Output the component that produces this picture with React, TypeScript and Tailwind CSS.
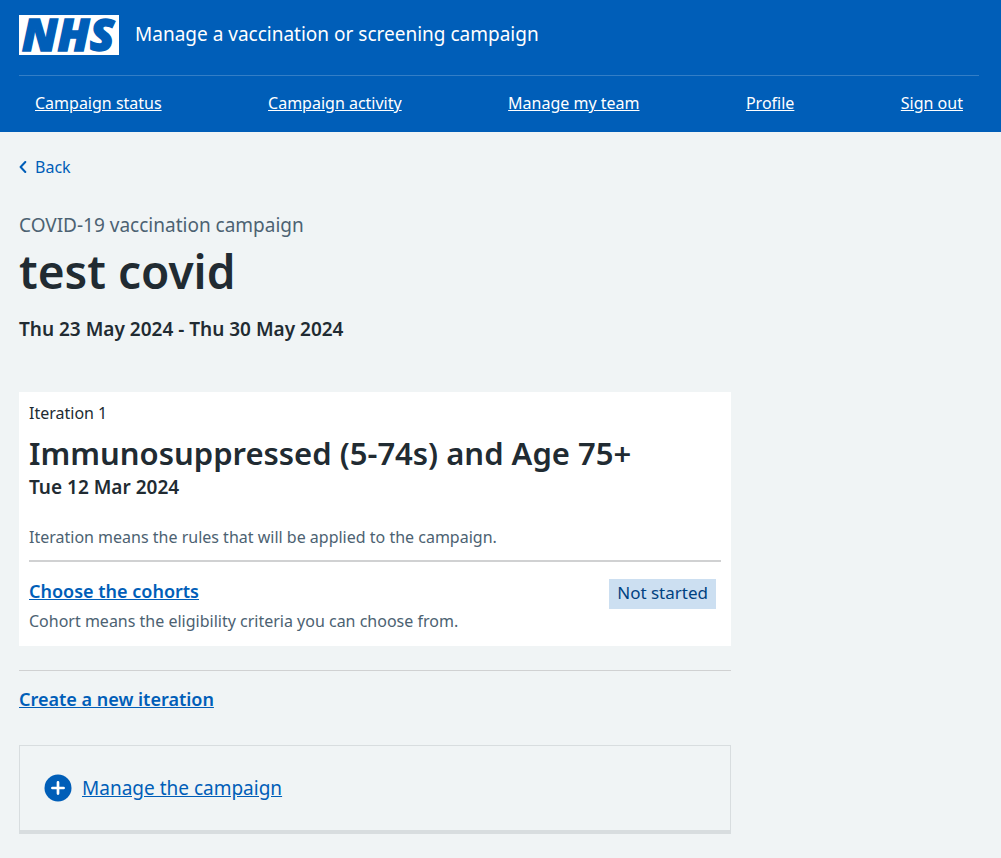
import React from "react";

const navItems = [
  "Campaign status",
  "Campaign activity",
  "Manage my team",
  "Profile",
  "Sign out",
];

function Logo() {
  return (
    <svg
      className="h-10 w-[100px] shrink-0 overflow-visible"
      viewBox="0 0 100 40"
      role="img"
      aria-label="NHS"
    >
      <rect width="100" height="40" fill="#fff" />
      <text
        x="3"
        y="36"
        fontSize="45"
        fontWeight="900"
        fontStyle="italic"
        fill="#005eb8"
        stroke="#005eb8"
        strokeWidth="1.4"
        className="font-['Noto_Sans','Open_Sans',sans-serif]"
      >
        NHS
      </text>
    </svg>
  );
}

function Header() {
  return (
    <header className="bg-[#005eb8] text-white">
      <div className="ml-[19px] mr-[22px] max-w-[960px]">
        <div className="flex items-center gap-4 pt-[15px] pb-5">
          <a href="#" className="shrink-0">
            <Logo />
          </a>
          <a href="#" className="pb-0.5 text-[19px] leading-7">
            Manage a vaccination or screening campaign
          </a>
        </div>
        <nav aria-label="Primary" className="border-t border-[#337ec6]">
          <ul className="flex justify-between px-4 pt-[15px] pb-[17px]">
            {navItems.map((item) => (
              <li key={item}>
                <a href="#" className="text-base leading-6 underline">
                  {item}
                </a>
              </li>
            ))}
          </ul>
        </nav>
      </div>
    </header>
  );
}

function BackLink() {
  return (
    <a href="#" className="flex w-fit items-center gap-2 text-base leading-6 text-[#005eb8]">
      <svg
        className="h-3 w-2"
        viewBox="0 0 8 12"
        fill="none"
        stroke="currentColor"
        strokeWidth="2"
        strokeLinecap="round"
        strokeLinejoin="round"
        aria-hidden="true"
      >
        <path d="M6.3 1 1.6 6l4.7 5" />
      </svg>
      Back
    </a>
  );
}

function IterationCard() {
  return (
    <section className="mt-[49px] bg-white px-2.5 pt-[9px] pb-[13px]">
      <p className="text-base leading-6">Iteration 1</p>
      <h2 className="mt-2 text-[31px] leading-10 font-semibold">
        Immunosuppressed (5-74s) and Age 75+
      </h2>
      <p className="text-[19px] leading-7 font-semibold">Tue 12 Mar 2024</p>
      <p className="mt-6 text-base leading-6 text-[#4c6272]">
        Iteration means the rules that will be applied to the campaign.
      </p>
      <div className="mt-[11px] flex items-start justify-between border-t-2 border-[#d0d1d2] pt-[17px] pr-[5px]">
        <div>
          <a
            href="#"
            className="block w-fit text-lg leading-6 font-semibold text-[#005eb8] underline"
          >
            Choose the cohorts
          </a>
          <p className="mt-1.5 text-base leading-6 text-[#4c6272]">
            Cohort means the eligibility criteria you can choose from.
          </p>
        </div>
        <strong className="bg-[#ccdff1] px-2 pt-[3px] pb-[5px] text-[17px] leading-[22px] font-normal text-[#004281]">
          Not started
        </strong>
      </div>
    </section>
  );
}

function ManagePanel() {
  return (
    <section className="mt-8 border border-b-4 border-[#d8dddf] px-6 py-7">
      <button
        type="button"
        className="flex cursor-pointer items-center gap-2.5 text-[19px] leading-7 text-[#005eb8]"
      >
        <svg className="h-7 w-7" viewBox="0 0 28 28" aria-hidden="true">
          <circle cx="14" cy="14" r="13.5" fill="#005eb8" />
          <path
            d="M14 8.4v11.2M8.4 14h11.2"
            stroke="#fff"
            strokeWidth="2.7"
            strokeLinecap="round"
          />
        </svg>
        <span className="underline">Manage the campaign</span>
      </button>
    </section>
  );
}

export default function App() {
  return (
    <div className="min-h-screen bg-[#f0f4f5] font-['Noto_Sans','Open_Sans',sans-serif] text-[#212b32]">
      <Header />
      <div className="ml-[19px] mr-[22px] max-w-[960px] pt-[23px] pb-6">
        <BackLink />
        <main className="mt-8 grid grid-cols-4 gap-8">
          <div className="col-span-3">
            <h1>
              <span className="block text-[19px] leading-7 text-[#4c6272]">
                COVID-19 vaccination campaign
              </span>
              <span className="block text-[46px] leading-[64px] font-semibold">test covid</span>
            </h1>
            <p className="mt-3 text-[19px] leading-7 font-semibold">
              Thu 23 May 2024 - Thu 30 May 2024
            </p>
            <IterationCard />
            <hr className="mt-6 border-[#d0d1d2]" />
            <a
              href="#"
              className="mt-3.5 block w-fit text-lg leading-7 font-semibold text-[#005eb8] underline"
            >
              Create a new iteration
            </a>
            <ManagePanel />
          </div>
        </main>
      </div>
    </div>
  );
}
